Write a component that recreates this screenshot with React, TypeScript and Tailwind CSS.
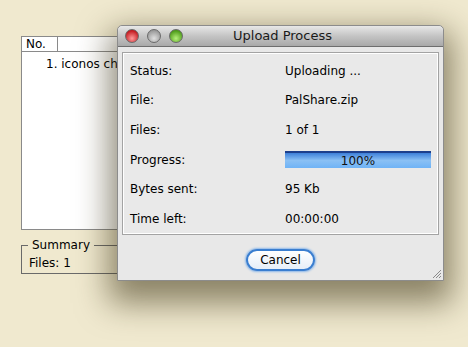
import React from "react";

const rows: [string, string][] = [
  ["Status:", "Uploading ..."],
  ["File:", "PalShare.zip"],
  ["Files:", "1 of 1"],
  ["Progress:", ""],
  ["Bytes sent:", "95 Kb"],
  ["Time left:", "00:00:00"],
];

function Light({ from, to }: { from: string; to: string }) {
  return (
    <div
      className="w-[14px] h-[14px] rounded-full border border-[#6a6a6a]"
      style={{ background: `radial-gradient(circle at 50% 70%, ${to} 0%, ${from} 75%)` }}
    />
  );
}

export default function App() {
  return (
    <div
      className="relative w-[468px] h-[347px] overflow-hidden bg-[#f0e9cf] text-[13px] text-black"
      style={{ fontFamily: '"DejaVu Sans", "Liberation Sans", sans-serif' }}
    >
      {/* background frame */}
      <div className="pl-[21px] pt-[36px] flex flex-col">
        <div className="w-[96px] h-[194px] bg-white border border-[#8a8a8a] border-r-0 flex flex-col overflow-hidden">
          <div className="flex h-[15px] border-b border-[#8a8a8a] text-[12px] leading-[14px]">
            <div className="w-[36px] pl-[4px] border-r border-[#8a8a8a]">No.</div>
            <div className="flex-1" />
          </div>
          <div className="pl-[24px] pt-[3px] text-[12px] whitespace-nowrap overflow-hidden">1. iconos chuchos</div>
        </div>
        <div className="relative mt-[15px] w-[96px] h-[29px] border border-[#6a6a6a] border-r-0">
          <div className="absolute -top-[9px] left-[6px] px-[4px] bg-[#f0e9cf] text-[12px] leading-[16px]">Summary</div>
          <div className="pl-[7px] pt-[9px] text-[12px] leading-[16px]">Files: 1</div>
        </div>
      </div>

      {/* dialog window */}
      <div
        className="absolute left-[117px] top-[25px] w-[327px] h-[256px] rounded-t-[5px] bg-[#e8e8e8] border border-[#8c8c8c] flex flex-col"
        style={{ boxShadow: "0 14px 32px 8px rgba(55,45,15,0.55)" }}
      >
        <div className="relative h-[21px] rounded-t-[5px] bg-gradient-to-b from-[#e8e8e8] via-[#c4c4c4] to-[#a9a9a9] border-b border-[#6e6e6e] flex items-center">
          <div className="flex gap-[8px] pl-[7px]">
            <Light from="#c2181d" to="#ff9a9a" />
            <Light from="#9a9a9a" to="#e0e0e0" />
            <Light from="#4c9a18" to="#b6f07a" />
          </div>
          <div className="absolute inset-0 flex items-center justify-center text-[13px] text-[#1a1a1a] pl-[4px]">
            Upload Process
          </div>
        </div>
        <div className="mx-[4px] mt-[5px] h-[183px] bg-[#e9e9e9] border border-[#a3a3a3] shadow-[inset_0_0_0_1px_#ffffff] pt-[3px]">
          {rows.map(([l, v]) => (
            <div key={l} className="h-[29.6px] flex items-center text-[12px]">
              <div className="w-[162px] pl-[7px]">{l}</div>
              {l === "Progress:" ? (
                <div className="relative w-[146px] h-[17px] border-t-2 border-[#1d3f8c] bg-gradient-to-b from-[#3d7fd8] via-[#8ac0f4] to-[#6fb3f6] flex items-center justify-center text-[12px] text-[#111]">
                  100%
                </div>
              ) : (
                <div>{v}</div>
              )}
            </div>
          ))}
        </div>
        <div className="flex-1 flex items-center justify-center relative pt-[4px]">
          <button className="w-[69px] h-[22px] rounded-full bg-gradient-to-b from-white to-[#e6eef8] border-2 border-[#3a7ed0] shadow-[0_0_2px_1px_#8cb8ea] text-[12px] leading-none">
            Cancel
          </button>
          <svg className="absolute right-[1px] bottom-[1px]" width="11" height="11" viewBox="0 0 11 11">
            <path d="M10 2 L2 10 M10 5 L5 10 M10 8 L8 10" stroke="#8a8a8a" strokeWidth="1" />
          </svg>
        </div>
      </div>
    </div>
  );
}
